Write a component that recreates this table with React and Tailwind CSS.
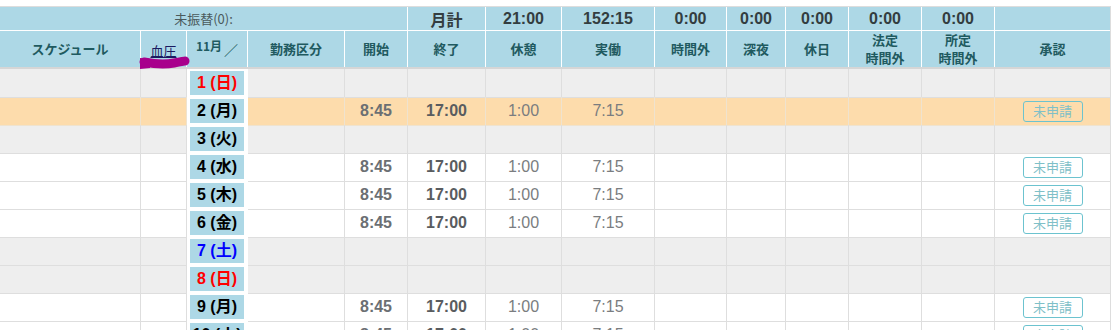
import React from 'react';

const COLS = 'grid grid-cols-[141px_46px_61px_97px_63px_78px_76px_93px_72px_59px_63px_73px_73px_115px]';
const FONT = { fontFamily: '"Liberation Sans", "Noto Sans CJK JP", sans-serif' };

const days = [
  { d: 1, w: '日', kind: 'off', color: 'text-[#ff0000]' },
  { d: 2, w: '月', kind: 'today', work: true },
  { d: 3, w: '火', kind: 'off' },
  { d: 4, w: '水', kind: 'work', work: true },
  { d: 5, w: '木', kind: 'work', work: true },
  { d: 6, w: '金', kind: 'work', work: true },
  { d: 7, w: '土', kind: 'off', color: 'text-[#0000ff]' },
  { d: 8, w: '日', kind: 'off', color: 'text-[#ff0000]' },
  { d: 9, w: '月', kind: 'work', work: true },
  { d: 10, w: '火', kind: 'work', work: true },
];

const summary = ['21:00', '152:15', '0:00', '0:00', '0:00', '0:00', '0:00', ''];

function HeadCell({ children, className = '' }) {
  return (
    <div className={`flex items-center justify-center border-r border-white text-center ${className}`}>
      {children}
    </div>
  );
}

function DayRow({ day }) {
  const bg =
    day.kind === 'today' ? 'bg-[#fddcac]' : day.kind === 'off' ? 'bg-[#eeeeee]' : 'bg-white';
  const line = day.kind === 'today' ? 'border-[#efe3cf]' : 'border-[#dedede]';
  const cell = `border-r border-b ${line} flex items-center justify-center`;
  return (
    <div className={`${COLS} h-[28px] ${bg}`}>
      <div className={cell} />
      <div className={cell} />
      <div className="border-r border-white bg-white px-[3px] pt-[2px] pb-[3px]">
        <div
          className={`flex h-full items-center justify-center bg-[#add8e6] text-[16px] font-bold ${
            day.color || 'text-black'
          }`}
        >
          {day.d} ({day.w})
        </div>
      </div>
      <div className={cell} />
      <div className={`${cell} text-[16px] font-bold text-[#6b6f73]`}>{day.work && '8:45'}</div>
      <div className={`${cell} text-[16px] font-bold text-[#595c60]`}>{day.work && '17:00'}</div>
      <div className={`${cell} text-[16px] text-[#7a7d80]`}>{day.work && '1:00'}</div>
      <div className={`${cell} text-[16px] text-[#7a7d80]`}>{day.work && '7:15'}</div>
      <div className={cell} />
      <div className={cell} />
      <div className={cell} />
      <div className={cell} />
      <div className={cell} />
      <div className={`${cell} border-r-0`}>
        {day.work && (
          <span
            className="flex h-[21px] w-[60px] items-center justify-center rounded-[3px] border border-[#6cc3cf] text-[13px] text-[#7fc0c8]"
            style={{ fontFamily: '"Noto Sans CJK JP", sans-serif' }}
          >
            未申請
          </span>
        )}
      </div>
    </div>
  );
}

export default function App() {
  return (
    <div className="h-[330px] w-[1118px] overflow-hidden bg-white pt-[6px]" style={FONT}>
      <div className="relative w-[1111px] border-t border-r border-[#dddddd]">
        {/* summary row */}
        <div className={`${COLS} h-[24px] border-b border-white bg-[#add8e6]`}>
          <HeadCell className="col-span-5 text-[13px] text-[#4b5a5c]">
            <span style={{ fontFamily: '"Noto Sans CJK JP", sans-serif' }}>未振替(0):</span>
          </HeadCell>
          <HeadCell className="text-[16px] font-bold text-[#333d40]">
            <span style={{ fontFamily: '"Noto Sans CJK JP", sans-serif' }}>月計</span>
          </HeadCell>
          {summary.map((v, i) => (
            <HeadCell
              key={i}
              className={`text-[16px] font-bold text-[#333d40] ${i === summary.length - 1 ? 'border-r-0' : ''}`}
            >
              {v}
            </HeadCell>
          ))}
        </div>

        {/* column titles */}
        <div
          className={`${COLS} h-[38px] border-b-2 border-[#d6d6d6] bg-[#add8e6] text-[13px] font-bold leading-[18px] text-[#1f5a60]`}
          style={{ fontFamily: '"Noto Sans CJK JP", sans-serif' }}
        >
          <HeadCell>スケジュール</HeadCell>
          <HeadCell>
            <span className="relative top-[2px] font-normal text-[#1a1a60] underline">血圧</span>
          </HeadCell>
          <HeadCell className="items-start pt-[6px] text-[12px]">
            11月<span className="relative top-[3px] ml-[2px] text-[14px] font-normal">／</span>
          </HeadCell>
          <HeadCell>勤務区分</HeadCell>
          <HeadCell>開始</HeadCell>
          <HeadCell>終了</HeadCell>
          <HeadCell>休憩</HeadCell>
          <HeadCell>実働</HeadCell>
          <HeadCell>時間外</HeadCell>
          <HeadCell>深夜</HeadCell>
          <HeadCell>休日</HeadCell>
          <HeadCell>
            法定
            <br />
            時間外
          </HeadCell>
          <HeadCell>
            所定
            <br />
            時間外
          </HeadCell>
          <HeadCell className="border-r-0">承認</HeadCell>
        </div>

        {/* marker scribble over the 血圧 heading */}
        <svg className="pointer-events-none absolute left-[138px] top-[42px]" width="52" height="26" viewBox="0 0 52 26">
          <path
            d="M6 13 C 16 15, 26 16, 36 14 S 46 12, 47 12"
            fill="none"
            stroke="#a8008c"
            strokeWidth="9"
            strokeLinecap="round"
          />
          <path d="M2 9 L2 20 L12 19 L12 10 Z" fill="#a8008c" />
        </svg>

        {days.map((d) => (
          <DayRow key={d.d} day={d} />
        ))}
      </div>
    </div>
  );
}
